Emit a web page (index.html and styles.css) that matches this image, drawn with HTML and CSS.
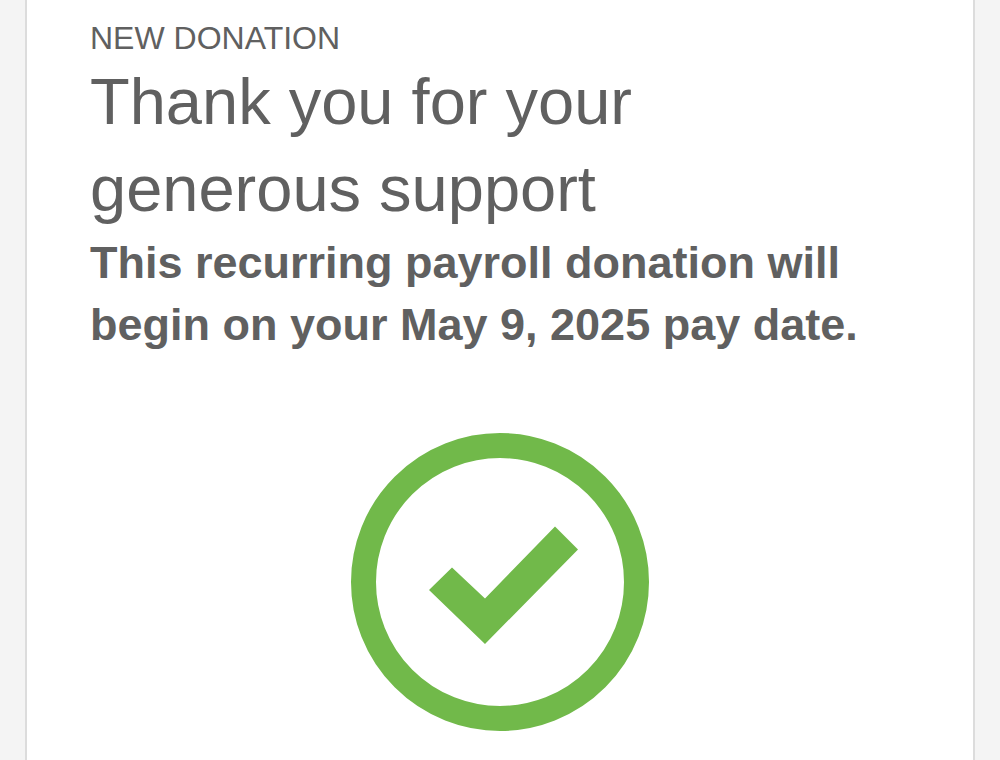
FILE: index.html
```html
<!DOCTYPE html>
<html lang="en">
<head>
<meta charset="utf-8">
<meta name="viewport" content="width=device-width, initial-scale=1">
<title>New donation</title>
<link rel="stylesheet" href="styles.css">
</head>
<body>
<main class="card">
  <header class="intro">
    <p class="eyebrow">NEW DONATION</p>
    <h1 class="title">Thank you for your generous support</h1>
    <p class="notice">This recurring payroll donation will begin on your May 9, 2025 pay date.</p>
  </header>
  <svg class="success-icon" viewBox="0 0 298 298" role="img" aria-label="Success">
    <circle cx="149" cy="149" r="136.5" fill="none" stroke="currentColor" stroke-width="25"/>
    <path d="M78 157 101 134.500 134 165.500 204 93.500 227 116.500 134 211Z" fill="currentColor"/>
  </svg>
</main>
</body>
</html>
```
FILE: styles.css
```css
* {
  box-sizing: border-box;
}

body {
  margin: 0;
  padding: 0 25px;
  background: #f4f4f4;
  color: #606060;
  font-family: "Liberation Sans", Arial, sans-serif;
}

.card {
  display: flex;
  flex-direction: column;
  gap: 77px;
  min-height: 100vh;
  padding: 18px 63px 28px;
  border: 2px solid #dcdcdc;
  border-width: 0 2px;
  background: #fff;
}

.intro {
  max-width: 800px;
}

.eyebrow,
.title,
.notice {
  margin: 0;
}

.eyebrow {
  font-size: 32px;
  line-height: 40px;
}

.title {
  max-width: 600px;
  font-size: 65px;
  font-weight: 400;
  line-height: 87px;
}

.notice {
  font-size: 45px;
  font-weight: 700;
  line-height: 62px;
}

.success-icon {
  display: block;
  align-self: center;
  width: 298px;
  height: 298px;
  color: #71b94a;
}
```
